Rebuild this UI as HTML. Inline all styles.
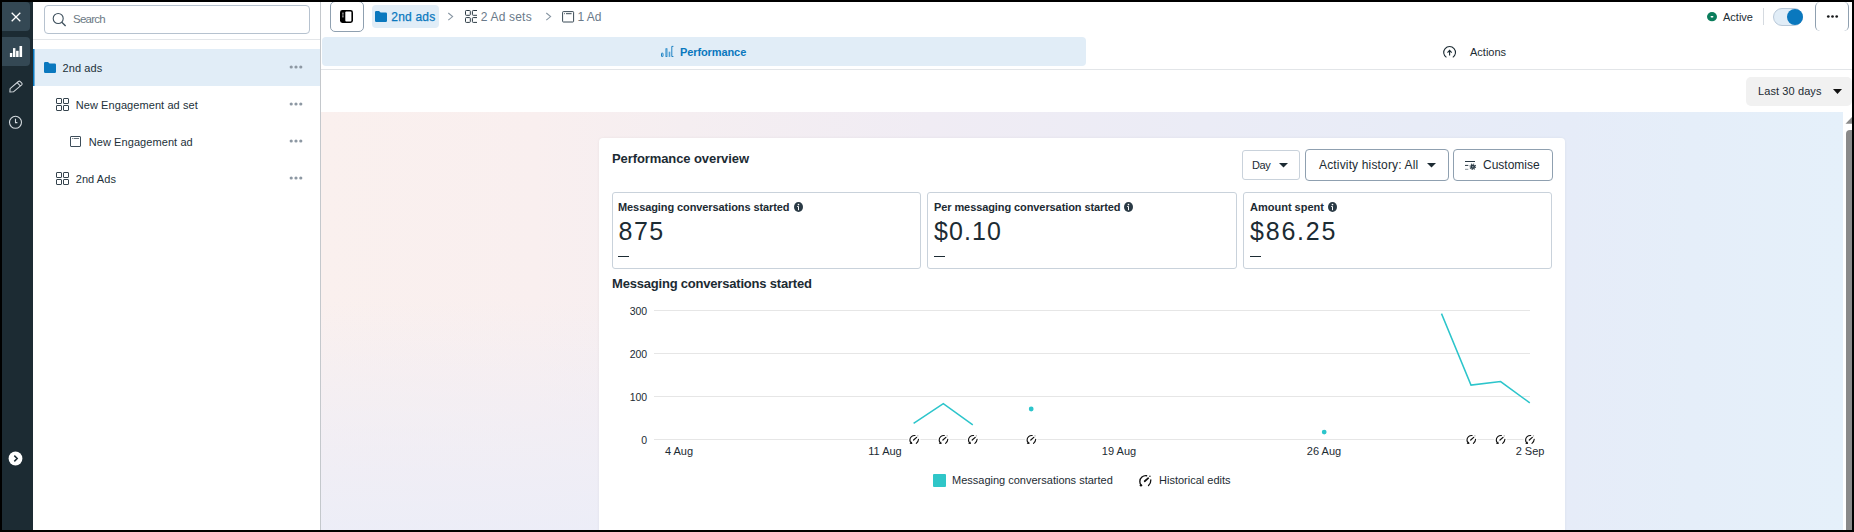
<!DOCTYPE html>
<html>
<head>
<meta charset="utf-8">
<title>Ads Manager</title>
<style>
*{box-sizing:border-box;margin:0;padding:0}
html,body{width:1854px;height:532px;overflow:hidden;background:#fff}
body{position:relative;font-family:"Liberation Sans",sans-serif;font-size:11px;color:#1c2b33}
.abs{position:absolute}
.t{position:absolute;white-space:nowrap;line-height:1}
svg{position:absolute;overflow:visible}
/* frame */
#frame{position:absolute;left:0;top:0;width:1854px;height:532px;border:2px solid #000;z-index:100;pointer-events:none}
/* rail */
#rail{left:2px;top:0;width:31px;height:532px;background:#1c2b33}
.rbtn{left:2px;width:28px;height:29px;background:#344854;border-radius:0 4px 4px 0}
/* sidebar */
#side{left:33px;top:0;width:288px;height:532px;background:#fff;border-right:1px solid #c4c8cc}
#search{left:44px;top:5px;width:266px;height:29px;border:1px solid #b6c2cf;border-radius:4px;background:#fff}
#sdiv{left:33px;top:39px;width:287px;height:1px;background:#e3e6e9}
#sel{left:33px;top:49px;width:287px;height:37px;background:linear-gradient(90deg,#0a78be 0,#0a78be 1px,#6fb0dc 1px,#6fb0dc 2px,#e1edf7 2px)}
.dots i{position:absolute;width:3.2px;height:3.2px;border-radius:50%;background:#8795a1;top:0}
/* top */
#tgl{left:330px;top:1px;width:34px;height:31px;border:1px solid #8fa0b0;border-radius:5px;background:#fff}
#chip{left:372px;top:5px;width:67px;height:23px;background:#e1edf7;border-radius:4px}
#tab{left:322px;top:37px;width:764px;height:29px;background:#e1edf7;border-radius:4px}
#tdiv{left:321px;top:69px;width:1531px;height:1px;background:#e2e5e8}
#more{left:1815px;top:2px;width:34px;height:29px;border-left:1px solid #8fa0b0;border-right:1px solid #8fa0b0;border-radius:5px}
#date{left:1746px;top:77px;width:106px;height:29px;background:#f1f1f1;border-radius:5px}
/* content */
#bg{left:321px;top:112px;width:1522px;height:420px;background:linear-gradient(90deg,#faf0ee 0%,#f9efef 14%,#f5eef1 24%,#f0ecf4 40%,#ebecf6 58%,#e8ecf7 72%,#e6ecf8 82%,#e5eef9 90%,#e5f0fa 100%)}
#bg2{left:321px;top:112px;width:290px;height:420px;background:linear-gradient(180deg, rgba(236,237,248,0) 0%, rgba(236,237,248,0) 45%, rgba(236,237,248,.55) 75%, rgba(235,237,248,.9) 100%)}
#card{left:599px;top:138px;width:966px;height:400px;background:#fff;border-radius:4px;box-shadow:0 0 3px rgba(0,0,0,.06)}
.btn{border:1px solid #8fa0b0;border-radius:4px;background:#fff}
.mbox{top:192px;height:77px;border:1px solid #c9d2db;border-radius:3px;background:#fff}
.mt{font-weight:bold;font-size:11px}
.mv{font-size:25px;letter-spacing:1.1px}
.gl{left:654px;width:876px;height:1px;background:#e6e6e6}
.yl{font-size:10.5px;text-align:right;width:30px;left:617.2px}
.tr{font-size:11px;letter-spacing:.08px;color:#22313a}
.xl{font-size:11px;text-align:center;width:60px}
</style>
</head>
<body>
<!-- LEFT RAIL -->
<div id="rail" class="abs"></div>
<div class="abs rbtn" style="top:2px"></div>
<div class="abs rbtn" style="top:37px"></div>
<svg style="left:11px;top:12px" width="10" height="10" viewBox="0 0 10 10"><path d="M.7 .7 L9.3 9.3 M9.3 .7 L.7 9.3" stroke="#fff" stroke-width="1.3" fill="none"/></svg>
<svg style="left:9px;top:45px" width="14" height="13" viewBox="0 0 14 13"><rect x=".9" y="8" width="2.4" height="4" fill="#fff"/><rect x="4" y="3.1" width="2.4" height="8.9" fill="#fff"/><rect x="7.1" y="5.8" width="2.5" height="6.2" fill="#fff"/><rect x="10.5" y="1" width="2.6" height="11" fill="#fff"/></svg>
<svg style="left:9px;top:80px" width="14" height="13" viewBox="0 0 14 13"><path d="M.9 11.9 L1.1 8.7 L9.4 1.5 Q10.4 .7 11.3 1.6 L12.8 3.1 Q13.6 4 12.7 4.9 L4.4 11.8 Z M8.2 2.6 L11.3 5.8" stroke="#d0d6db" stroke-width="1.05" fill="none" stroke-linejoin="round"/></svg>
<svg style="left:8px;top:115px" width="15" height="15" viewBox="0 0 15 15"><circle cx="7.5" cy="7.3" r="6" stroke="#d3d9de" stroke-width="1.1" fill="none"/><path d="M7.5 3.8 V7.6 H9.4" stroke="#d3d9de" stroke-width="1.1" fill="none"/></svg>
<svg style="left:8px;top:451px" width="15" height="15" viewBox="0 0 15 15"><circle cx="7.5" cy="7.5" r="6.9" fill="#fff"/><path d="M6.3 4.6 L9.2 7.5 L6.3 10.4" stroke="#1c2b33" stroke-width="1.5" fill="none"/></svg>

<!-- SIDEBAR -->
<div id="side" class="abs"></div>
<div id="search" class="abs"></div>
<svg style="left:52px;top:12px" width="15" height="15" viewBox="0 0 15 15"><circle cx="6.2" cy="6.5" r="5" stroke="#3d4f5c" stroke-width="1.1" fill="none"/><path d="M9.8 10.2 L13.6 14" stroke="#3d4f5c" stroke-width="1.3"/></svg>
<div class="t" id="srch" style="left:73px;top:13.5px;font-size:11.5px;color:#6c7985;letter-spacing:-.75px">Search</div>
<div id="sdiv" class="abs"></div>
<div id="sel" class="abs"></div>

<!-- tree rows -->
<svg style="left:44px;top:62px" width="12" height="11" viewBox="0 0 12 11"><path d="M0 1.2 Q0 0 1.2 0 H4 L5.6 1.6 H10.8 Q12 1.6 12 2.8 V9.8 Q12 11 10.8 11 H1.2 Q0 11 0 9.8 Z" fill="#0a78be"/></svg>
<div class="t tr" style="left:62.6px;top:63px">2nd ads</div>
<svg class="g4" style="left:56px;top:98px" width="13" height="13" viewBox="0 0 13 13"><g fill="none" stroke="#36444e" stroke-width="1"><rect x=".5" y=".5" width="5" height="5" rx=".5"/><rect x="7.5" y=".5" width="5" height="5" rx=".5"/><rect x=".5" y="7.5" width="5" height="5" rx=".5"/><rect x="7.5" y="7.5" width="5" height="5" rx=".5"/></g></svg>
<div class="t tr" style="left:75.7px;top:100px">New Engagement ad set</div>
<svg style="left:70px;top:136px" width="11" height="11" viewBox="0 0 11 11"><g fill="none" stroke="#3d4d59" stroke-width="1"><rect x=".5" y=".5" width="10" height="10" rx=".5"/><path d="M2 2.5 H2.8 M3.6 2.5 H9" stroke-width=".8"/></g></svg>
<div class="t tr" style="left:88.7px;top:137px">New Engagement ad</div>
<svg class="g4" style="left:56px;top:172px" width="13" height="13" viewBox="0 0 13 13"><g fill="none" stroke="#36444e" stroke-width="1"><rect x=".5" y=".5" width="5" height="5" rx=".5"/><rect x="7.5" y=".5" width="5" height="5" rx=".5"/><rect x=".5" y="7.5" width="5" height="5" rx=".5"/><rect x="7.5" y="7.5" width="5" height="5" rx=".5"/></g></svg>
<div class="t tr" style="left:75.7px;top:174px">2nd Ads</div>
<svg style="left:289px;top:65.1px" width="14" height="4" viewBox="0 0 14 4"><g fill="#8d98a3"><circle cx="2.2" cy="2" r="1.6"/><circle cx="7" cy="2" r="1.6"/><circle cx="11.8" cy="2" r="1.6"/></g></svg>
<svg style="left:289px;top:102.1px" width="14" height="4" viewBox="0 0 14 4"><g fill="#8d98a3"><circle cx="2.2" cy="2" r="1.6"/><circle cx="7" cy="2" r="1.6"/><circle cx="11.8" cy="2" r="1.6"/></g></svg>
<svg style="left:289px;top:139.1px" width="14" height="4" viewBox="0 0 14 4"><g fill="#8d98a3"><circle cx="2.2" cy="2" r="1.6"/><circle cx="7" cy="2" r="1.6"/><circle cx="11.8" cy="2" r="1.6"/></g></svg>
<svg style="left:289px;top:176.1px" width="14" height="4" viewBox="0 0 14 4"><g fill="#8d98a3"><circle cx="2.2" cy="2" r="1.6"/><circle cx="7" cy="2" r="1.6"/><circle cx="11.8" cy="2" r="1.6"/></g></svg>

<!-- TOP BAR -->
<div id="tgl" class="abs"></div>
<svg style="left:340px;top:10px" width="13" height="13" viewBox="0 0 13 13"><rect x="0" y="0" width="13" height="13" rx="2.4" fill="#000"/><rect x="5.3" y="1.6" width="6.1" height="9.8" rx="1" fill="#fff"/><path d="M2 3.2 H3.8 M2 5 H3.8 M2 6.8 H3.8" stroke="#fff" stroke-width=".7"/></svg>
<div id="chip" class="abs"></div>
<svg style="left:375px;top:11px" width="12" height="11" viewBox="0 0 12 11"><path d="M0 1.2 Q0 0 1.2 0 H4 L5.6 1.6 H10.8 Q12 1.6 12 2.8 V9.8 Q12 11 10.8 11 H1.2 Q0 11 0 9.8 Z" fill="#0a78be"/></svg>
<div class="t" id="bc1" style="left:391.3px;top:11px;font-size:12px;letter-spacing:.2px;color:#0a78be;-webkit-text-stroke:.25px #0a78be">2nd ads</div>
<svg style="left:447px;top:12px" width="7" height="9" viewBox="0 0 7 9"><path d="M1.3 1 L5.6 4.6 L1.3 8.2" stroke="#8896a3" stroke-width="1.1" fill="none"/></svg>
<svg style="left:465px;top:10px" width="12" height="13" viewBox="0 0 12 13"><g fill="none" stroke="#2b3a44" stroke-width="1"><rect x=".5" y=".5" width="4.8" height="4.8" rx=".8"/><rect x=".5" y="7.6" width="4.8" height="4.8" rx=".8"/><path d="M12 .5 H8.2 Q7.4 .5 7.4 1.3 V4.5 Q7.4 5.3 8.2 5.3 H12"/><path d="M12 7.6 H8.2 Q7.4 7.6 7.4 8.4 V11.6 Q7.4 12.4 8.2 12.4 H12"/></g></svg>
<div class="t" id="bc2" style="left:480.7px;top:11px;font-size:12px;letter-spacing:.2px;color:#6a7a8a">2 Ad sets</div>
<svg style="left:545px;top:12px" width="7" height="9" viewBox="0 0 7 9"><path d="M1.3 1 L5.6 4.6 L1.3 8.2" stroke="#8896a3" stroke-width="1.1" fill="none"/></svg>
<svg style="left:562px;top:10.5px" width="12" height="12" viewBox="0 0 12 12"><g fill="none" stroke="#3a4a56" stroke-width="1"><rect x=".6" y=".6" width="11" height="10.4" rx=".7"/><path d="M2.2 2.7 H3 M4 2.7 H9.6"/></g></svg>
<div class="t" id="bc3" style="left:577.5px;top:11px;font-size:12px;color:#6a7a8a">1 Ad</div>

<svg style="left:1707px;top:12px" width="10" height="10" viewBox="0 0 10 10"><ellipse cx="5" cy="4.7" rx="5" ry="4.6" fill="#0b7d5c"/><rect x="3.6" y="4" width="2.8" height="1.4" rx=".6" fill="#fff"/></svg>
<div class="t" style="left:1723px;top:12px;font-size:11px">Active</div>
<div class="abs" style="left:1763px;top:8px;width:1px;height:17px;background:#d5dae0"></div>
<div class="abs" style="left:1773px;top:8px;width:30px;height:18px;border-radius:9px;background:#e1edf7;border:1px solid #b9c9d9"></div>
<div class="abs" style="left:1787px;top:9px;width:16px;height:16px;border-radius:50%;background:#0a78be"></div>
<div id="more" class="abs"></div>
<svg style="left:1826px;top:14px" width="13" height="5" viewBox="0 0 13 5"><g fill="#16181a"><circle cx="2.3" cy="2.5" r="1.35"/><circle cx="6.5" cy="2.5" r="1.35"/><circle cx="10.7" cy="2.5" r="1.35"/></g></svg>

<!-- TABS -->
<div id="tab" class="abs"></div>
<svg style="left:661px;top:46px" width="13" height="11" viewBox="0 0 13 11"><rect x=".5" y="7.2" width="1.5" height="3.3" rx=".3" fill="none" stroke="#0a78be" stroke-width=".9"/><rect x="4.5" y="2.3" width="1.9" height="8.6" fill="#1a82c4"/><rect x="5.2" y="3.2" width=".5" height="6.8" fill="#9cc8e8"/><rect x="7.7" y="5.7" width="1.6" height="5.2" fill="#4f9fd3"/><path d="M12.4 .4 H10.8 V10.5 H12.4" fill="none" stroke="#0a78be" stroke-width=".9"/></svg>
<div class="t" id="perf" style="left:680px;top:47px;font-size:11px;font-weight:bold;color:#0a78be;letter-spacing:-.1px">Performance</div>
<svg style="left:1443px;top:46px" width="13" height="13" viewBox="0 0 13 13"><path d="M3.4 11.4 A5.9 5.9 0 1 1 9.8 11.4" stroke="#1c2b33" stroke-width="1.1" fill="none"/><path d="M6.6 9.6 V4.6 M4.5 6.6 L6.6 4.4 L8.7 6.6" stroke="#1c2b33" stroke-width="1.1" fill="none"/></svg>
<div class="t" style="left:1470px;top:47px;font-size:11px">Actions</div>
<div id="tdiv" class="abs"></div>

<!-- DATE -->
<div id="date" class="abs"></div>
<div class="t" style="left:1758px;top:86px;font-size:11px;letter-spacing:.1px">Last 30 days</div>
<svg style="left:1833px;top:89px" width="9" height="5" viewBox="0 0 9 5"><path d="M0 0 H9 L4.5 5 Z" fill="#111"/></svg>

<!-- CONTENT BG + scrollbar -->
<div id="bg" class="abs"></div><div id="bg2" class="abs"></div>
<div class="abs" style="left:1846px;top:130px;width:13px;height:410px;background:#8a8a8a;border-radius:4px 4px 0 0"></div>
<svg style="left:1845px;top:117px" width="14" height="7" viewBox="0 0 14 7"><path d="M.5 6.8 L7 0 L13.5 6.8 Z" fill="#8a8a8a"/></svg>

<!-- CARD -->
<div id="card" class="abs"></div>
<div class="t" id="po" style="left:612px;top:152px;font-size:13px;font-weight:bold;letter-spacing:-.09px">Performance overview</div>
<div class="abs btn" style="left:1242px;top:150px;width:58px;height:30px;border-color:#c9d2db;border-radius:3px"></div>
<div class="t" style="left:1252px;top:160px;font-size:11px;letter-spacing:-.4px">Day</div>
<svg style="left:1279px;top:163px" width="9" height="5" viewBox="0 0 9 5"><path d="M0 0 H9 L4.5 4.6 Z" fill="#1c2b33"/></svg>
<div class="abs btn" style="left:1305px;top:149px;width:144px;height:32px"></div>
<div class="t" id="ah" style="left:1319px;top:159px;font-size:12px;letter-spacing:.16px">Activity history: All</div>
<svg style="left:1427px;top:163px" width="9" height="5" viewBox="0 0 9 5"><path d="M0 0 H9 L4.5 4.6 Z" fill="#1c2b33"/></svg>
<div class="abs btn" style="left:1453px;top:149px;width:100px;height:32px"></div>
<svg style="left:1465px;top:161px" width="11" height="10" viewBox="0 0 11 10"><path d="M0 .5 H10 M0 4.4 H3.3" stroke="#2a3a45" stroke-width="1" fill="none"/><path d="M0 8.3 H3.3" stroke="#8a949c" stroke-width="1" fill="none"/><circle cx="7.8" cy="5.7" r="2.3" fill="#2a3a45"/><circle cx="7.8" cy="5.7" r="2.75" fill="none" stroke="#2a3a45" stroke-width="1.1" stroke-dasharray="1.08 1.08"/><circle cx="7.8" cy="5.7" r=".8" fill="#9aa6ae"/></svg>
<div class="t" id="cu" style="left:1483px;top:159px;font-size:12px">Customise</div>

<!-- metric boxes -->
<div class="abs mbox" style="left:612px;width:309px"></div>
<div class="abs mbox" style="left:927px;width:310px"></div>
<div class="abs mbox" style="left:1243px;width:309px"></div>
<div class="t mt" id="m1" style="left:618px;top:202px;letter-spacing:-.09px">Messaging conversations started</div>
<div class="t mt" id="m2" style="left:934px;top:202px;letter-spacing:-.09px">Per messaging conversation started</div>
<div class="t mt" id="m3" style="left:1250px;top:202px;letter-spacing:0">Amount spent</div>
<svg style="left:794px;top:202px" width="10" height="10" viewBox="0 0 10 10"><ellipse cx="4.5" cy="5" rx="4.5" ry="4.95" fill="#2a3a45"/><circle cx="4.5" cy="2.5" r=".85" fill="#fff"/><path d="M3.2 4.5 H4.5 V8.2" stroke="#fff" stroke-width="1" fill="none"/></svg><svg style="left:1124px;top:202px" width="10" height="10" viewBox="0 0 10 10"><ellipse cx="4.5" cy="5" rx="4.5" ry="4.95" fill="#2a3a45"/><circle cx="4.5" cy="2.5" r=".85" fill="#fff"/><path d="M3.2 4.5 H4.5 V8.2" stroke="#fff" stroke-width="1" fill="none"/></svg><svg style="left:1328px;top:202px" width="10" height="10" viewBox="0 0 10 10"><ellipse cx="4.5" cy="5" rx="4.5" ry="4.95" fill="#2a3a45"/><circle cx="4.5" cy="2.5" r=".85" fill="#fff"/><path d="M3.2 4.5 H4.5 V8.2" stroke="#fff" stroke-width="1" fill="none"/></svg>
<div class="t mv" id="v1" style="letter-spacing:1.4px;left:618.6px;top:219px">875</div>
<div class="t mv" id="v2" style="left:934px;top:219px">$0.10</div>
<div class="t mv" id="v3" style="letter-spacing:1.8px;left:1250px;top:219px">$86.25</div>
<div class="abs" style="left:618px;top:256px;width:11px;height:1px;background:#1c2b33"></div>
<div class="abs" style="left:934px;top:256px;width:11px;height:1px;background:#1c2b33"></div>
<div class="abs" style="left:1250px;top:256px;width:11px;height:1px;background:#1c2b33"></div>

<!-- chart -->
<div class="t" id="ct" style="left:612px;top:277px;font-size:13px;font-weight:bold;letter-spacing:-.2px">Messaging conversations started</div>
<div class="abs gl" style="top:310px"></div>
<div class="abs gl" style="top:353px"></div>
<div class="abs gl" style="top:396px"></div>
<div class="abs gl" style="top:439px"></div>
<div class="t yl" style="top:306px">300</div>
<div class="t yl" style="top:349px">200</div>
<div class="t yl" style="top:392px">100</div>
<div class="t yl" style="top:435px">0</div>
<div class="t xl" style="left:649px;top:446px">4 Aug</div>
<div class="t xl" style="left:855px;top:446px">11 Aug</div>
<div class="t xl" style="left:1089px;top:446px">19 Aug</div>
<div class="t xl" style="left:1294px;top:446px">26 Aug</div>
<div class="t xl" style="left:1500px;top:446px">2 Sep</div>
<svg style="left:0;top:0" width="1854" height="532" viewBox="0 0 1854 532">
<g fill="none" stroke="#2cc5cb" stroke-width="1.5" stroke-linejoin="miter">
<path d="M913.6 423.3 L943.3 403.6 L972.8 424.8"/>
<path d="M1441.5 313.6 L1471 385.1 L1500.6 381.6 L1529.8 402.9"/>
</g>
<circle cx="1031.2" cy="409" r="2.4" fill="#2cc5cb"/>
<circle cx="1324.2" cy="432.1" r="2.4" fill="#2cc5cb"/>
<defs>
<g id="he"><rect x="-1" y="-1" width="12.5" height="11" fill="#fff"/><path d="M6.1 .6 C3.4 .3 1 2.4 1 5 C1 6.3 1.5 7.2 2.1 7.9" stroke="#111" stroke-width="1.15" fill="none" stroke-linecap="round"/><path d="M.6 8.8 L3.5 9.1 L2.9 6.5 Z" fill="#111"/><path d="M4.7 5.1 L7.7 2.5" stroke="#111" stroke-width="1.25" stroke-linecap="round"/><circle cx="8.9" cy=".9" r=".65" fill="#999"/><path d="M9.6 4.4 C9.5 6 8.7 7.5 7.4 8.5" stroke="#111" stroke-width="1.15" fill="none" stroke-linecap="round"/></g>
</defs>
<use href="#he" x="908.9" y="434.9"/>
<use href="#he" x="938.2" y="434.9"/>
<use href="#he" x="967.5" y="434.9"/>
<use href="#he" x="1026.1" y="434.9"/>
<use href="#he" x="1466" y="434.9"/>
<use href="#he" x="1495.3" y="434.9"/>
<use href="#he" x="1524.6" y="434.9"/>
</svg>
<div class="abs" style="left:933px;top:474px;width:13px;height:13px;background:#2fc6c8;border-radius:1px"></div>
<div class="t" style="left:952px;top:475px;font-size:11px">Messaging conversations started</div>
<svg style="left:1137.8px;top:475px" width="14.4" height="12" viewBox="0 0 10.4 9.4"><path d="M6.3 .6 C3.6 .2 1 2.3 1 5 C1 6.3 1.4 7.2 2 7.9" stroke="#111" stroke-width="1.05" fill="none" stroke-linecap="round"/><circle cx="1.9" cy="8.1" r=".95" fill="#111"/><path d="M4.8 4.9 L7.6 2.5" stroke="#111" stroke-width="1.35" stroke-linecap="round"/><circle cx="8.9" cy=".9" r=".6" fill="#222"/><path d="M9.6 3.8 C9.7 5.6 8.9 7.2 7.8 8.2" stroke="#111" stroke-width="1.05" fill="none" stroke-linecap="round"/></svg>
<div class="t" style="left:1159px;top:475px;font-size:11px">Historical edits</div>

<div id="frame"></div>
</body>
</html>
